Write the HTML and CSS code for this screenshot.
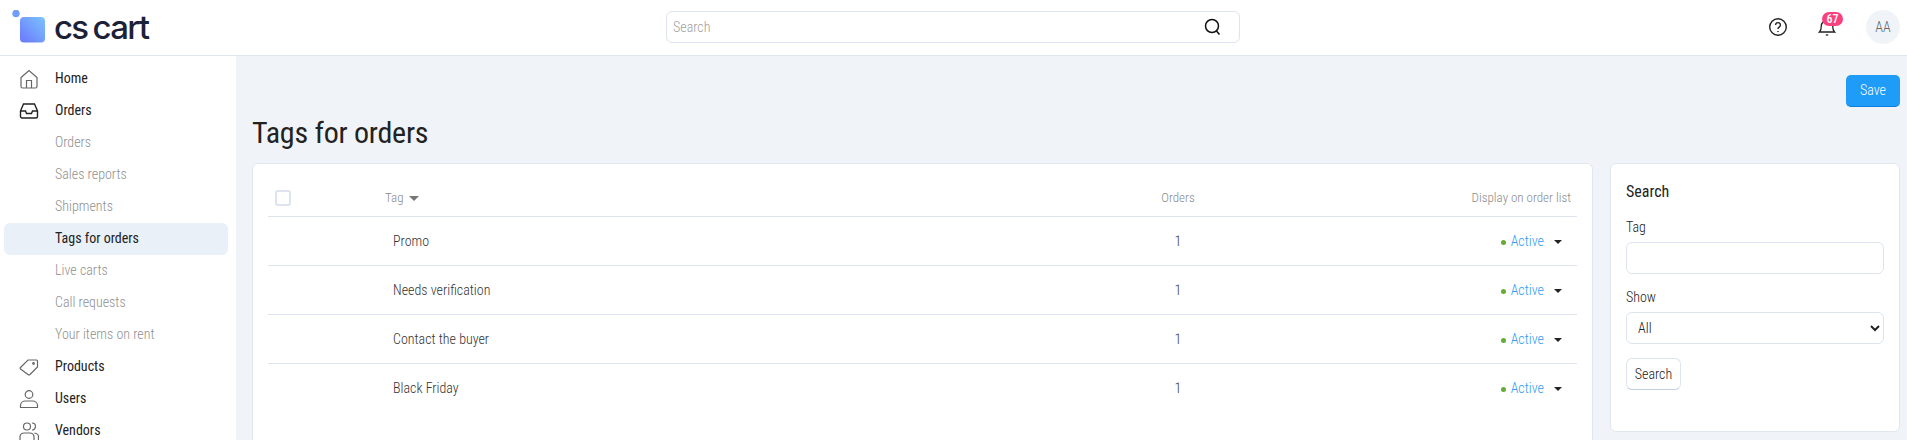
FILE: index.html
```html
<!DOCTYPE html>
<html>
<head>
    <meta charset="utf-8">
    <title>Tags for orders</title>
    <link rel="stylesheet" href="styles.css">
</head>
<body>
    <header class="topbar">
        <div class="logo">
            <svg class="logoMark" width="34" height="34" viewBox="0 0 34 34">
                <defs>
                    <linearGradient id="logoGrad" x1="1" y1="0" x2="0" y2="1">
                        <stop offset="0" stop-color="#7cc4ff"/>
                        <stop offset="1" stop-color="#6a76fb"/>
                    </linearGradient>
                </defs>
                <rect x="8" y="7" width="25" height="25.500" rx="4" fill="url(#logoGrad)"/>
                <circle cx="4" cy="3.500" r="3.700" fill="#6f9dfb"/>
            </svg>
            <span class="logoText">cs cart</span>
        </div>
        <div class="globalSearch">
            <span class="globalSearchText">Search</span>
            <svg width="20" height="20" viewBox="0 0 20 20" fill="none" stroke="#111" stroke-width="1.500">
                <circle cx="9" cy="9" r="6.500"/>
                <path d="M13.500 14l3 3.500"/>
            </svg>
        </div>
        <div class="topIcons">
            <svg width="20" height="20" viewBox="0 0 20 20" fill="none" stroke="#222" stroke-width="1.400">
                <circle cx="10" cy="10" r="8.300"/>
                <path d="M7.600 8a2.400 2.400 0 1 1 3.600 2.100c-.8.500-1.200 1-1.200 1.900"/>
                <path d="M10 14v1"/>
            </svg>
            <div class="bell">
                <svg width="18" height="20" viewBox="0 0 18 20" fill="none" stroke="#222" stroke-width="1.300">
                    <path d="M1.500 15c1.300-1.300 1.800-2.800 1.800-6a5.700 5.700 0 0 1 11.400 0c0 3.200.5 4.700 1.800 6z"/>
                    <path d="M7.800 18h2.400"/>
                </svg>
                <span class="badge">67</span>
            </div>
            <div class="avatar">AA</div>
        </div>
    </header>

    <div class="layout">
        <nav class="sidebar">
            <a class="menuItem">
                <svg class="menuIcon" width="20" height="20" viewBox="0 0 20 20" fill="none" stroke="#666" stroke-width="1.200">
                    <path d="M2 8.500L10 1.500l8 7v9a1.500 1.500 0 0 1-1.500 1.500h-13A1.500 1.500 0 0 1 2 17.500z"/>
                    <path d="M7.500 19v-7.500h5V19"/>
                </svg>
                Home
            </a>
            <a class="menuItem">
                <svg class="menuIcon" width="20" height="20" viewBox="0 0 20 20" fill="none" stroke="#222" stroke-width="1.400">
                    <path d="M1.500 10l3-7h11l3 7v5.500a1.500 1.500 0 0 1-1.500 1.500H3a1.500 1.500 0 0 1-1.500-1.500z"/>
                    <path d="M1.500 10h5l1 2.500h5l1-2.500h5"/>
                </svg>
                Orders
            </a>
            <a class="subItem">Orders</a>
            <a class="subItem">Sales reports</a>
            <a class="subItem">Shipments</a>
            <a class="subItem subItemActive">Tags for orders</a>
            <a class="subItem">Live carts</a>
            <a class="subItem">Call requests</a>
            <a class="subItem">Your items on rent</a>
            <a class="menuItem">
                <svg class="menuIcon" width="20" height="20" viewBox="0 0 20 20" fill="none" stroke="#666" stroke-width="1.200">
                    <path d="M1.500 10.500L9 3h8.500a1 1 0 0 1 1 1v6L11 17.500a1.500 1.500 0 0 1-2 0L1.500 12a1 1 0 0 1 0-1.500z"/>
                    <circle cx="14.500" cy="6.500" r=".8"/>
                </svg>
                Products
            </a>
            <a class="menuItem">
                <svg class="menuIcon" width="20" height="20" viewBox="0 0 20 20" fill="none" stroke="#666" stroke-width="1.200">
                    <circle cx="10" cy="5.500" r="3.800"/>
                    <path d="M1.500 18.500v-2c0-3 2.500-4.500 5-4.500h7c2.500 0 5 1.500 5 4.500v2z"/>
                </svg>
                Users
            </a>
            <a class="menuItem">
                <svg class="menuIcon" width="20" height="20" viewBox="0 0 20 20" fill="none" stroke="#666" stroke-width="1.200">
                    <circle cx="8" cy="5.500" r="3.500"/>
                    <path d="M13 2a3.500 3.500 0 0 1 0 7"/>
                    <path d="M1 19v-3c0-2.500 2-4 4.500-4h5c2.500 0 4.500 1.500 4.500 4v3"/>
                    <path d="M15.500 12c2 .3 4 1.700 4 4v3"/>
                </svg>
                Vendors
            </a>
        </nav>

        <main class="content">
            <div class="actions">
                <button class="saveBtn">Save</button>
            </div>
            <h1 class="pageTitle">Tags for orders</h1>
            <div class="columns">
                <section class="card tableCard">
                    <table class="tagsTable">
                        <thead>
                            <tr>
                                <th class="colCheck"><span class="checkbox"></span></th>
                                <th class="colTag">Tag <span class="sortArrow"></span></th>
                                <th class="colOrders">Orders</th>
                                <th class="colStatus">Display on order list</th>
                            </tr>
                        </thead>
                        <tbody>
                            <tr>
                                <td></td>
                                <td class="tagName">Promo</td>
                                <td class="colOrders">1</td>
                                <td class="colStatus"><span class="dot"></span><a class="statusLink">Active</a><span class="caret"></span></td>
                            </tr>
                            <tr>
                                <td></td>
                                <td class="tagName">Needs verification</td>
                                <td class="colOrders">1</td>
                                <td class="colStatus"><span class="dot"></span><a class="statusLink">Active</a><span class="caret"></span></td>
                            </tr>
                            <tr>
                                <td></td>
                                <td class="tagName">Contact the buyer</td>
                                <td class="colOrders">1</td>
                                <td class="colStatus"><span class="dot"></span><a class="statusLink">Active</a><span class="caret"></span></td>
                            </tr>
                            <tr>
                                <td></td>
                                <td class="tagName">Black Friday</td>
                                <td class="colOrders">1</td>
                                <td class="colStatus"><span class="dot"></span><a class="statusLink">Active</a><span class="caret"></span></td>
                            </tr>
                        </tbody>
                    </table>
                </section>
                <aside class="card searchCard">
                    <h3 class="searchTitle">Search</h3>
                    <label class="fieldLabel">Tag</label>
                    <input class="field" type="text">
                    <label class="fieldLabel">Show</label>
                    <select class="field fieldSelect"><option>All</option></select>
                    <button class="searchBtn">Search</button>
                </aside>
            </div>
        </main>
    </div>
</body>
</html>
```

FILE: styles.css
```css
html, body {
    height: 100%;
}
body {
    margin: 0;
    background-color: #f0f4f9;
    color: #222222;
    font-family: Roboto, "Liberation Sans", sans-serif;
    font-size: 14px;
    font-weight: 350;
    font-stretch: 87%;
    overflow: hidden;
}
button, input, select {
    font-family: inherit;
    font-size: 14px;
    font-weight: 350;
    font-stretch: 87%;
}
.topbar {
    display: grid;
    grid-template-columns: 666px 574px 1fr;
    align-items: center;
    height: 54px;
    padding-bottom: 1px;
    background-color: #ffffff;
    border-bottom: 1px solid #e1e7f0;
}
.logo {
    display: flex;
    align-items: center;
    gap: 8px;
    padding-left: 12px;
}
.logoText {
    font-family: Inter, Roboto, sans-serif;
    font-size: 33px;
    font-weight: 500;
    font-stretch: 100%;
    letter-spacing: -1.7px;
    word-spacing: -2px;
    color: #1b2238;
}
.globalSearch {
    display: flex;
    align-items: center;
    justify-content: space-between;
    height: 30px;
    padding: 0 16px 0 6px;
    background-color: #ffffff;
    border: 1px solid #dde4ef;
    border-radius: 6px;
}
.globalSearchText {
    color: #a0a0a0;
}
.topIcons {
    display: flex;
    align-items: center;
    justify-content: flex-end;
    gap: 30px;
    padding-right: 7px;
}
.bell {
    position: relative;
    display: flex;
}
.badge {
    position: absolute;
    top: -5px;
    left: 4px;
    width: 21px;
    height: 14px;
    line-height: 14px;
    border-radius: 7px;
    background-color: #f8417d;
    color: #ffffff;
    font-size: 12px;
    font-weight: 500;
    text-align: center;
}
.avatar {
    width: 34px;
    height: 34px;
    line-height: 34px;
    border-radius: 50%;
    background-color: #f0f4f9;
    color: #666666;
    text-align: center;
}
.layout {
    display: flex;
    height: 384px;
}
.sidebar {
    flex: 0 0 236px;
    display: flex;
    flex-direction: column;
    padding: 7px 8px 0 4px;
    box-sizing: border-box;
    background-color: #ffffff;
}
.menuItem, .subItem {
    display: flex;
    align-items: center;
    box-sizing: border-box;
    flex: 0 0 32px;
    height: 32px;
    padding: 0 0 2px 51px;
    border-radius: 6px;
}
.menuItem {
    position: relative;
    color: #222222;
    font-weight: 450;
}
.menuIcon {
    position: absolute;
    left: 15px;
    top: 6px;
}
.subItem {
    color: #8f8f8f;
}
.subItemActive {
    background-color: #e9f0f8;
    color: #222222;
    font-weight: 450;
}
.content {
    flex: 1;
    padding: 19px 7px 0 16px;
    min-width: 0;
}
.actions {
    display: flex;
    justify-content: flex-end;
}
.saveBtn {
    box-sizing: border-box;
    width: 54px;
    height: 32px;
    padding: 0 0 1px 0;
    background-color: #1f9bf8;
    border: 0;
    border-bottom: 1px solid #0b7fdc;
    border-radius: 5px;
    color: #ffffff;
}
.pageTitle {
    margin: 8px 0 12px 0;
    font-size: 30px;
    font-stretch: 84%;
    letter-spacing: -0.25px;
    line-height: 36px;
    font-weight: 400;
}
.columns {
    display: flex;
    gap: 17px;
    align-items: flex-start;
}
.card {
    box-sizing: border-box;
    background-color: #ffffff;
    border: 1px solid #e1e7f0;
    border-radius: 6px;
}
.tableCard {
    flex: 1;
    height: 300px;
    padding: 15px 15px 0 15px;
}
.tagsTable {
    width: 100%;
    border-collapse: collapse;
}
.tagsTable th {
    height: 37px;
    padding: 0;
    font-weight: 350;
    font-size: 13px;
    color: #8a8a8a;
    text-align: left;
    border-bottom: 1px solid #dde4ef;
}
.tagsTable td {
    height: 48px;
    padding: 0;
    color: #333333;
    border-bottom: 1px solid #dde4ef;
}
.tagsTable tr:last-child td {
    border-bottom: 0;
}
.colCheck {
    width: 117px;
}
.tagsTable th.colCheck {
    padding-left: 7px;
    box-sizing: border-box;
}
.checkbox {
    display: block;
    width: 12px;
    height: 12px;
    border: 2px solid #dde4ef;
    border-radius: 3px;
}
.colTag {
    width: 668px;
}
.sortArrow {
    display: inline-block;
    margin-left: 3px;
    border-left: 5px solid transparent;
    border-right: 5px solid transparent;
    border-top: 5px solid #777777;
    vertical-align: 1px;
}
.tagsTable .tagName {
    padding-left: 8px;
}
.tagsTable .colOrders {
    text-align: center;
    width: 250px;
}
.tagsTable .colStatus {
    text-align: right;
    padding-right: 15px;
}
.tagsTable th.colStatus {
    padding-right: 6px;
}
.dot {
    display: inline-block;
    width: 5px;
    height: 5px;
    margin-right: 5px;
    border-radius: 50%;
    background-color: #64ab37;
    vertical-align: 1px;
}
.statusLink {
    color: #2f9bf4;
}
.caret {
    display: inline-block;
    margin-left: 10px;
    border-left: 4px solid transparent;
    border-right: 4px solid transparent;
    border-top: 4px solid #222222;
    vertical-align: 2px;
}
.searchCard {
    flex: 0 0 290px;
    height: 269px;
    padding: 18px 15px 0 15px;
}
.searchTitle {
    margin: 0 0 18px 0;
    font-size: 16px;
    font-weight: 450;
}
.fieldLabel {
    display: block;
    margin-bottom: 7px;
}
.field {
    display: block;
    box-sizing: border-box;
    width: 100%;
    height: 32px;
    margin-bottom: 15px;
    padding: 0 7px;
    background-color: #ffffff;
    border: 1px solid #dde4ef;
    border-radius: 6px;
    color: #222222;
}
.fieldSelect {
    margin-bottom: 14px;
}
.searchBtn {
    width: 55px;
    height: 32px;
    padding: 0;
    background-color: #ffffff;
    border: 1px solid #dde4ef;
    border-bottom-color: #c4cfe0;
    border-radius: 6px;
    color: #222222;
}
```
